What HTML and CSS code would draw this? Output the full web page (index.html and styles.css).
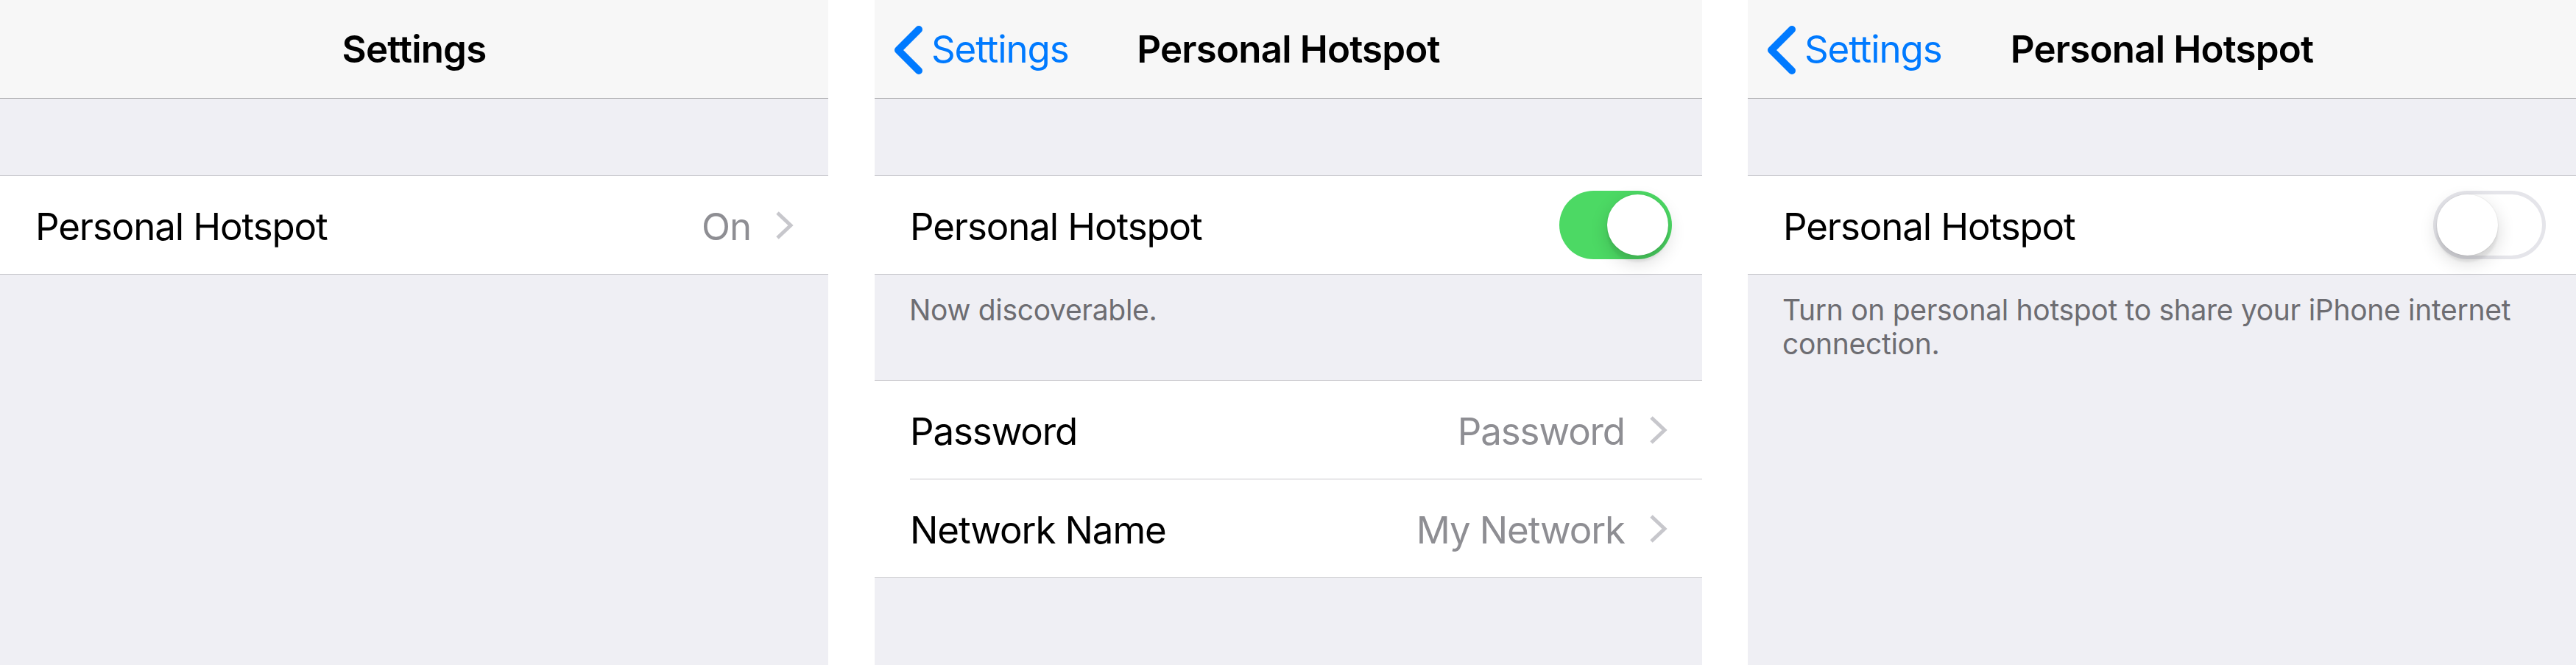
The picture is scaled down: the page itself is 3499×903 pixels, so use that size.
FILE: index.html
```html
<!DOCTYPE html>
<html lang="en">
<head>
<meta charset="utf-8">
<title>Personal Hotspot</title>
<link rel="stylesheet" href="styles.css">
</head>
<body>
<div class="screens">
  <section class="panel">
    <header class="nav">
      <span></span>
      <h1 class="nav-title">Settings</h1>
      <span></span>
    </header>
    <div class="group">
      <div class="cell">
        <div class="cell-inner">
          <span class="cell-label">Personal Hotspot</span>
          <span class="cell-value">On</span>
          <svg class="chev" viewBox="0 0 26 40" width="26" height="40"><polyline points="3,3 21,20 3,37"/></svg>
        </div>
      </div>
    </div>
  </section>

  <section class="panel panel-mid">
    <header class="nav">
      <a class="back"><svg class="back-chev" viewBox="0 0 40 66" width="40" height="66"><polyline points="35,5 7,33 35,61"/></svg><span class="back-label">Settings</span></a>
      <h1 class="nav-title">Personal Hotspot</h1>
      <span></span>
    </header>
    <div class="group">
      <div class="cell">
        <div class="cell-inner cell-switch">
          <span class="cell-label">Personal Hotspot</span>
          <span class="switch on"><span class="knob"></span></span>
        </div>
      </div>
    </div>
    <p class="footer">Now discoverable.</p>
    <div class="group">
      <div class="cell">
        <div class="cell-inner">
          <span class="cell-label">Password</span>
          <span class="cell-value">Password</span>
          <svg class="chev" viewBox="0 0 26 40" width="26" height="40"><polyline points="3,3 21,20 3,37"/></svg>
        </div>
      </div>
      <div class="cell">
        <div class="cell-inner">
          <span class="cell-label">Network Name</span>
          <span class="cell-value">My Network</span>
          <svg class="chev" viewBox="0 0 26 40" width="26" height="40"><polyline points="3,3 21,20 3,37"/></svg>
        </div>
      </div>
    </div>
  </section>

  <section class="panel">
    <header class="nav">
      <a class="back"><svg class="back-chev" viewBox="0 0 40 66" width="40" height="66"><polyline points="35,5 7,33 35,61"/></svg><span class="back-label">Settings</span></a>
      <h1 class="nav-title">Personal Hotspot</h1>
      <span></span>
    </header>
    <div class="group">
      <div class="cell">
        <div class="cell-inner cell-switch">
          <span class="cell-label">Personal Hotspot</span>
          <span class="switch off"><span class="knob"></span></span>
        </div>
      </div>
    </div>
    <p class="footer">Turn on personal hotspot to share your iPhone internet connection.</p>
  </section>
</div>
</body>
</html>
```

FILE: styles.css
```css
html, body {
  margin: 0;
  padding: 0;
  background: #ffffff;
}

body {
  font-family: Inter, "Liberation Sans", sans-serif;
  -webkit-font-smoothing: antialiased;
}

.screens {
  display: flex;
  width: 3499px;
  height: 903px;
}

.panel {
  width: 1125px;
  height: 903px;
  flex: none;
  background: #efeff4;
  overflow: hidden;
}

.panel-mid {
  width: 1124px;
  margin: 0 62px 0 63px;
}

/* Navigation bar */
.nav {
  height: 133px;
  background: #f7f7f7;
  border-bottom: 1px solid #a9a9ac;
  display: grid;
  grid-template-columns: 1fr auto 1fr;
  align-items: center;
}

.nav-title {
  margin: 0;
  font-size: 51px;
  font-weight: 600;
  letter-spacing: -0.8px;
  color: #000;
  line-height: 1.2;
}

.back {
  display: flex;
  align-items: center;
  margin-left: 25px;
  color: #007aff;
  text-decoration: none;
}

.back-chev {
  flex: none;
  margin-top: 2px;
}

.back-chev polyline {
  fill: none;
  stroke: #007aff;
  stroke-width: 10;
  stroke-linecap: round;
  stroke-linejoin: round;
}

.back-label {
  margin-left: 12px;
  font-size: 51px;
  letter-spacing: -1.1px;
  line-height: 1.2;
}

/* Grouped table */
.group {
  margin-top: 104px;
  background: #ffffff;
  border-top: 1px solid #c8c7cc;
  border-bottom: 1px solid #c8c7cc;
}

.footer + .group {
  margin-top: 0;
}

.cell {
  padding-left: 48px;
}

.cell-inner {
  box-sizing: border-box;
  height: 134px;
  padding-top: 4px;
  display: flex;
  align-items: center;
  padding-right: 46px;
  border-bottom: 1px solid #c8c7cc;
}

.cell:last-child .cell-inner {
  border-bottom: none;
  height: 133px;
}

.cell-switch {
  padding-top: 0;
  padding-right: 41px;
}

.cell-switch .cell-label {
  padding-top: 4px;
}

.cell-label {
  flex: 1;
  font-size: 51px;
  letter-spacing: -1.1px;
  color: #000;
  line-height: 1.2;
}

.cell-value {
  font-size: 51px;
  letter-spacing: -1.1px;
  color: #8e8e93;
  line-height: 1.2;
  margin-right: 33px;
}

.chev {
  flex: none;
  margin-top: -4px;
}

.chev polyline {
  fill: none;
  stroke: #c7c7cc;
  stroke-width: 5;
  stroke-linejoin: miter;
}

/* Footer */
.footer {
  margin: 0;
  padding: 25px 40px 72px 47px;
  font-size: 39px;
  line-height: 46px;
  letter-spacing: -0.3px;
  color: #6d6d72;
}

/* Switch */
.switch {
  flex: none;
  box-sizing: border-box;
  width: 153px;
  height: 93px;
  border-radius: 47px;
  padding: 5px;
  display: flex;
}

.switch.on {
  background: #4cd964;
  justify-content: flex-end;
}

.switch.off {
  background: #ffffff;
  box-shadow: inset 0 0 0 5px #e5e5ea;
  justify-content: flex-start;
}

.knob {
  width: 83px;
  height: 83px;
  border-radius: 50%;
  background: #ffffff;
  box-shadow: 0 0 0 1px rgba(0, 0, 0, 0.04), 0 9px 3px rgba(0, 0, 0, 0.06), 0 9px 24px rgba(0, 0, 0, 0.16);
}
```
